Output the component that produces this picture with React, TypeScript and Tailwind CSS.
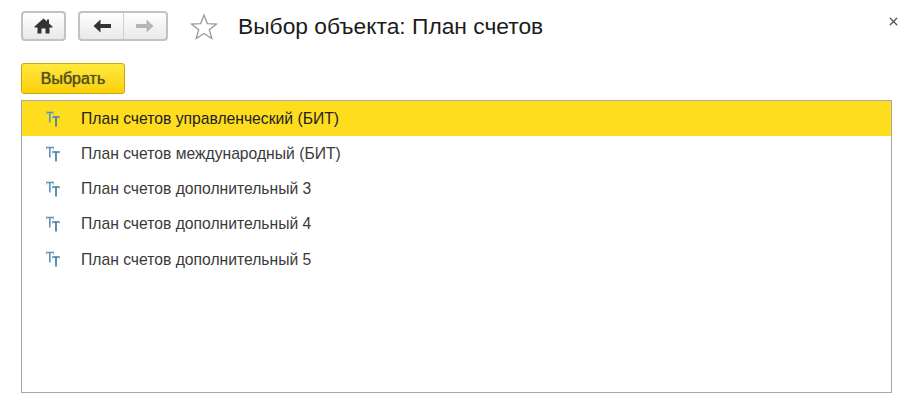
import { X } from 'lucide-react';

const rows = [
  'План счетов управленческий (БИТ)',
  'План счетов международный (БИТ)',
  'План счетов дополнительный 3',
  'План счетов дополнительный 4',
  'План счетов дополнительный 5',
];

function TreeIcon() {
  return (
    <svg width="16" height="16" viewBox="0 0 16 16" className="shrink-0" fill="none">
      <path d="M1 1.5H9M4.8 1.5V11.5" stroke="#5d93b5" strokeWidth="1.6" />
      <path d="M1.5 0.5V3.5M8.5 0.5V3.5" stroke="#8fb4cb" strokeWidth="1" />
      <path d="M7 6H15M11 6V15.5" stroke="#3f7da3" strokeWidth="1.7" />
      <path d="M7.5 5V7.5M14.5 5V7.5" stroke="#8fb4cb" strokeWidth="1" />
    </svg>
  );
}

export default function App() {
  return (
    <main className="w-[907px] h-[402px] bg-white overflow-hidden relative font-['Liberation_Sans',Arial,sans-serif]">
      <div className="flex items-center pl-[21px] pt-[11px] h-[41px]">
        <button className="w-[45px] h-[30px] flex items-center justify-center rounded-[4px] border-2 border-[#c2c2c2] bg-gradient-to-b from-white to-[#e9e9e9]">
          <svg width="19" height="16" viewBox="0 0 19 16" fill="#333333">
            <path d="M9.5 0.5L0.5 8.5V9.5H3.5V15.5H7.5V10.5H11.5V15.5H15.5V9.5H18.5V8.5L15 5.4V1.5H13V3.6Z" />
          </svg>
        </button>
        <div className="ml-[12px] w-[90px] h-[30px] flex rounded-[4px] border-2 border-[#c2c2c2] bg-gradient-to-b from-white to-[#e9e9e9]">
          <div className="w-[44px] flex items-center justify-center border-r border-[#d0d0d0]">
            <svg width="18" height="14" viewBox="0 0 18 14" fill="#333333">
              <path d="M7.5 0.5L0.5 7L7.5 13.5V9H18V5H7.5Z" />
            </svg>
          </div>
          <div className="flex-1 flex items-center justify-center">
            <svg width="18" height="14" viewBox="0 0 18 14" fill="#b5b5b5">
              <path d="M10.5 0.5L17.5 7L10.5 13.5V9H0V5H10.5Z" />
            </svg>
          </div>
        </div>
        <svg width="28" height="27" viewBox="0 0 28 27" fill="none" className="ml-[22px]">
          <path d="M14 2L17.3 10.6L26.5 11L19.3 16.7L21.8 25.5L14 20.5L6.2 25.5L8.7 16.7L1.5 11L10.7 10.6Z" stroke="#9a9a9a" strokeWidth="1.3" />
        </svg>
        <h1 className="ml-[20px] text-[22.8px] leading-[30px] text-[#1c1c1c]">Выбор объекта: План счетов</h1>
      </div>
      <X size={13} strokeWidth={2.5} className="absolute left-[887px] top-[15px] text-[#555555]" />

      <div className="pl-[21px] pr-[15px] pt-[22px]">
        <button className="w-[104px] h-[31px] rounded-[3px] border border-[#c9a70a] bg-gradient-to-b from-[#ffe83a] to-[#fbd000] text-[16px] text-[#55511f] [text-shadow:0_0_1px_#55511f]">
          Выбрать
        </button>
        <div className="mt-[6px] h-[293px] border-[1.5px] border-[#a8a8a8] bg-white">
          {rows.map((row, i) => (
            <div
              key={row}
              className={`h-[35.2px] flex items-center pl-[23px] text-[15.7px] text-[#3a3a3a] ${i === 0 ? 'bg-[#fedc1e] text-[#222222]' : ''}`}
            >
              <TreeIcon />
              <span className="ml-[20px]">{row}</span>
            </div>
          ))}
        </div>
      </div>
    </main>
  );
}
